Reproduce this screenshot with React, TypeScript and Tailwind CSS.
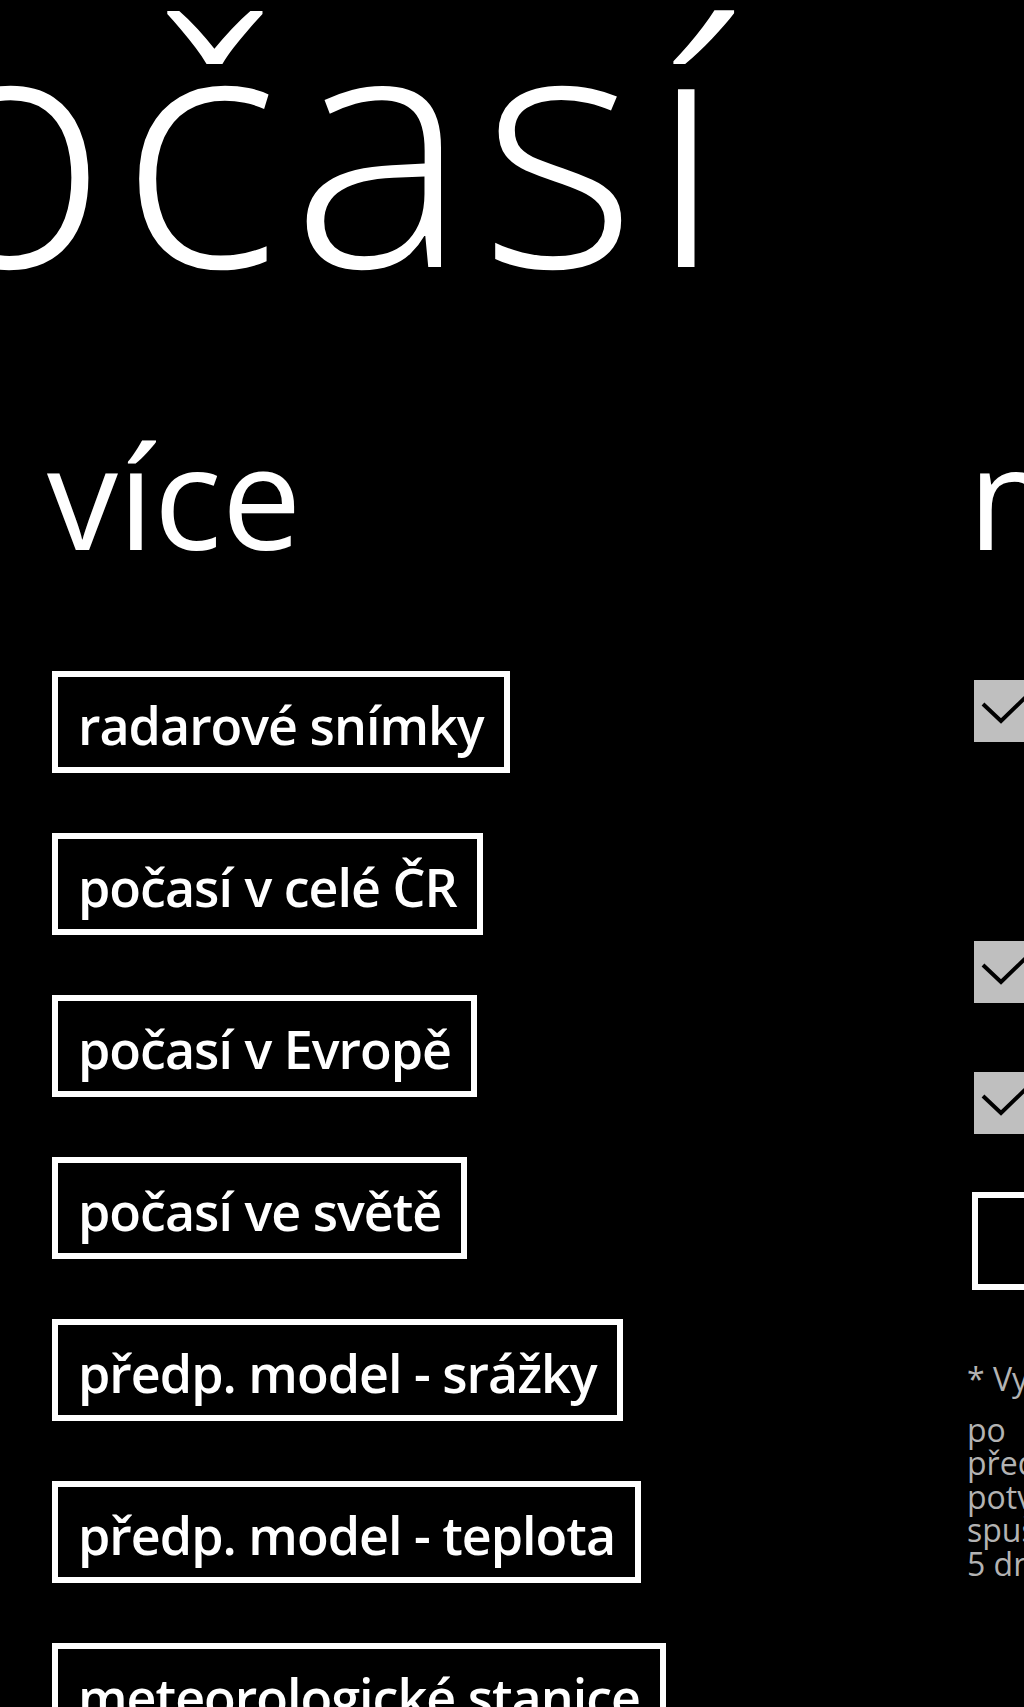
const menuItems = [
  "radarové snímky",
  "počasí v celé ČR",
  "počasí v Evropě",
  "počasí ve světě",
  "předp. model - srážky",
  "předp. model - teplota",
  "meteorologické stanice",
];

const footnote = [
  "předchozí lokality se",
  "potvrzují při každém",
  "spuštění, nejdéle však",
  "5 dní po posledním použití.",
];

function CheckMark() {
  return (
    <svg width="62" height="62" viewBox="0 0 62 62" className="block">
      <polyline
        points="9,24 27,41 58,11"
        fill="none"
        stroke="#000"
        strokeWidth="4"
        strokeLinejoin="miter"
      />
    </svg>
  );
}

function SettingCheck({ label, className }: { label: string; className?: string }) {
  return (
    <div className={"flex items-start gap-[20px] ml-[6px] " + (className ?? "")}>
      <div className="w-[62px] h-[62px] shrink-0 bg-[#bfbfbf]">
        <CheckMark />
      </div>
      <span className="text-[40px] leading-[62px] whitespace-nowrap">{label}</span>
    </div>
  );
}

export default function App() {
  return (
    <div className="w-[1024px] h-[1707px] overflow-hidden bg-black text-white font-['Open_Sans',sans-serif]">
      {/* panorama title */}
      <h1 className="text-[335px] leading-none font-light tracking-[12px] whitespace-nowrap -mt-[30px] -ml-[300px]">
        počasí
      </h1>

      <div className="flex">
        {/* více */}
        <section className="w-[968px] shrink-0 pl-[47px]">
          <h2 className="text-[142px] leading-none font-normal mt-[119px]">více</h2>
          <div className="flex flex-col items-start gap-[60px] mt-[105px] ml-[5px]">
            {menuItems.map((item) => (
              <button
                key={item}
                className="h-[102px] shrink-0 border-[6px] border-white bg-black px-[20px] pt-[6px] text-left"
              >
                <span className="block text-[52px] leading-none font-semibold tracking-[-1px] whitespace-nowrap">
                  {item}
                </span>
              </button>
            ))}
          </div>
        </section>

        {/* nastavení */}
        <section className="w-[600px] shrink-0">
          <h2 className="text-[142px] leading-none font-normal mt-[119px] whitespace-nowrap">nastavení</h2>
          <SettingCheck label="zobrazovat aktuální polohu" className="mt-[114px]" />
          <SettingCheck label="živá dlaždice *" className="mt-[199px]" />
          <SettingCheck label="upozornění" className="mt-[69px]" />
          <button className="mt-[58px] ml-[4px] w-[480px] h-[98px] border-[6px] border-white bg-black text-center text-[40px] font-semibold">
            vyhledat město
          </button>
          <div className="mt-[72px] -ml-[1px] text-[32px] leading-[33.5px] text-[#b3b3b3] whitespace-nowrap">
            <p>* Vyžaduje restart aplikace.</p>
            <p className="mt-[17px]">
              po<span className="ml-[60px]">uplynutí doby platnosti</span>
            </p>
            {footnote.map((line) => (
              <p key={line}>{line}</p>
            ))}
          </div>
        </section>
      </div>
    </div>
  );
}
